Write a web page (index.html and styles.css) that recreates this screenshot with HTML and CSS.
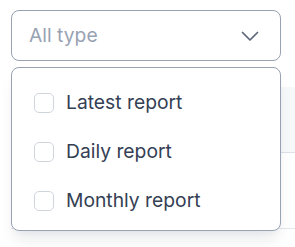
FILE: index.html
```html
<!DOCTYPE html>
<html>
<head>
<meta charset="utf-8">
<link rel="stylesheet" href="styles.css">
</head>
<body>
<div class="page">
  <div class="filter">
    <div class="select">
      <span class="placeholder">All type</span>
      <svg class="chevron" width="20" height="20" viewBox="0 0 20 20" fill="none"><path d="M2.5 6.5 L10 14 L17.5 6.5" stroke="#5d6678" stroke-width="1.7" stroke-linecap="round" stroke-linejoin="round"/></svg>
    </div>
    <div class="menu">
      <label class="option"><span class="box"></span><span class="label">Latest report</span></label>
      <label class="option"><span class="box"></span><span class="label">Daily report</span></label>
      <label class="option"><span class="box"></span><span class="label">Monthly report</span></label>
    </div>
  </div>
  <div class="table">
    <div class="thead"></div>
    <div class="trow"></div>
  </div>
</div>
</body>
</html>
```
FILE: styles.css
```css
* { box-sizing: border-box; }
html, body { margin: 0; padding: 0; background: #ffffff; }
body { font-family: Inter, "Noto Sans", sans-serif; overflow: hidden; }
.page { width: 295px; height: 247px; padding-top: 10px; }
.filter { position: relative; margin-left: 11px; width: 270px; z-index: 2; }
.select {
  height: 51px;
  border: 1px solid #98a2b3;
  border-radius: 8px;
  display: flex;
  align-items: center;
  justify-content: space-between;
  padding: 0 20px 0 17px;
  background: #fff;
}
.placeholder { font-size: 19.3px; color: #98a2b3; margin-top: -2px; }
.chevron { display: block; }
.menu {
  position: absolute;
  top: 57px;
  left: 0;
  width: 270px;
  height: 164px;
  background: #fff;
  border: 1px solid #98a2b3;
  border-radius: 8px;
  padding: 10px 0 5px 22px;
  display: flex;
  flex-direction: column;
  box-shadow: 0 12px 16px -4px rgba(16,24,40,0.09), 0 4px 6px -2px rgba(16,24,40,0.04);
}
.option { height: 49px; display: flex; align-items: center; gap: 12px; }
.box {
  width: 20px; height: 20px;
  border: 1.5px solid #d0d5dd;
  border-radius: 5px;
  background: #fff;
  flex: none;
}
.label { font-size: 19.3px; color: #344054; margin-top: -1px; }
.table { margin-top: 26px; margin-left: 11px; position: relative; z-index: 1; }
.thead { height: 66px; background: #f7f8fa; border-bottom: 1px solid #dde1e7; }
.trow { height: 76px; border-bottom: 1px solid #e4e7ec; }
```
